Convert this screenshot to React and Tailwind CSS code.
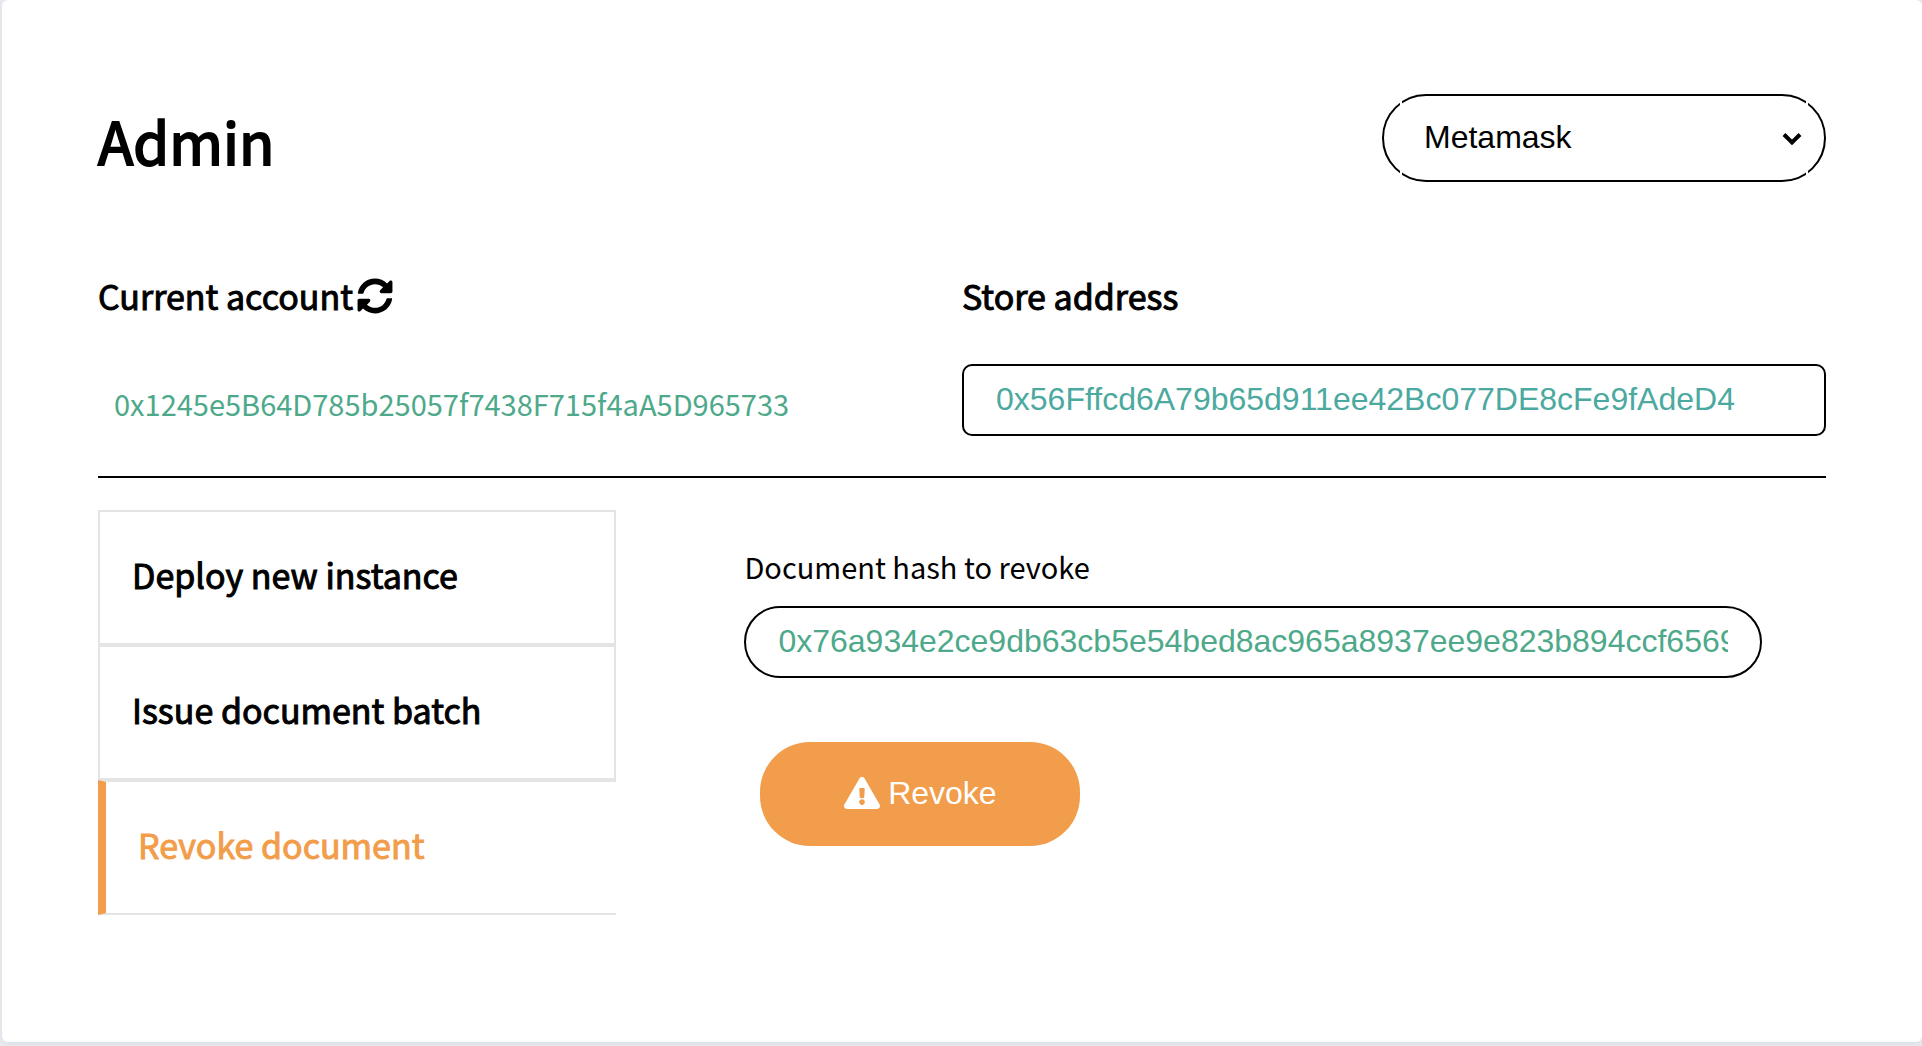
import { FaSyncAlt, FaExclamationTriangle } from "react-icons/fa";

const heading = "text-[34px] leading-[48px] font-normal [-webkit-text-stroke:1px_currentColor]";

const notches = [
  "top-[7px] left-[18px]",
  "top-[7px] right-[18px]",
  "bottom-[7px] left-[18px]",
  "bottom-[7px] right-[18px]",
];

function Tab({ label, active }) {
  return (
    <button
      type="button"
      role="tab"
      aria-selected={active ? "true" : "false"}
      className={
        active
          ? "block w-full border-y-2 border-l-8 border-y-[#e4e4e4] border-l-[#f29d4b] px-8 pt-[39px] pb-11 text-left text-[#f29d4b]"
          : "block w-full border-2 border-[#e4e4e4] px-8 pt-[39px] pb-11 text-left"
      }
    >
      <span className={`block ${heading}`}>{label}</span>
    </button>
  );
}

export default function App() {
  return (
    <div className="min-h-screen bg-[#e8ecf0] pb-1 pl-0.5 font-['Noto_Sans_CJK_SC',sans-serif] text-black">
      <main className="rounded-md bg-white px-24 pt-[94px] pb-[127px] shadow-[0_2px_8px_rgba(0,0,0,0.06)]">
        <header className="flex items-start justify-between">
          <h1 className="pt-1.5 text-[58px] leading-[80px] font-normal [-webkit-text-stroke:2px_currentColor]">
            Admin
          </h1>
          <div className="relative w-[444px]">
            <select
              aria-label="Provider"
              className="h-[88px] w-full appearance-none rounded-full border-2 border-black bg-white px-10 pb-0.5 font-['Liberation_Sans',sans-serif] text-[32px]"
            >
              <option>Metamask</option>
            </select>
            {/* Small breaks where the outline's corner joints meet */}
            {notches.map((place) => (
              <span
                key={place}
                aria-hidden="true"
                className={`pointer-events-none absolute h-1 w-0.5 bg-white ${place}`}
              />
            ))}
            <svg
              viewBox="0 0 20 14"
              className="pointer-events-none absolute top-[38px] right-6 h-3.5 w-5"
              fill="none"
              stroke="currentColor"
              strokeWidth="4"
              aria-hidden="true"
            >
              <path d="M2 2.5 10 10.5 18 2.5" />
            </svg>
          </div>
        </header>

        <section className="mt-[90px] grid grid-cols-2 border-b-2 border-black pb-10">
          <div>
            <h2 className={`flex items-center gap-1 ${heading}`}>
              Current account
              <button type="button" aria-label="Refresh account">
                <FaSyncAlt className="size-9" />
              </button>
            </h2>
            <p className="mt-[55px] px-4 text-[29px] leading-[56px] text-[#4da98a]">
              0x1245e5B64D785b25057f7438F715f4aA5D965733
            </p>
          </div>
          <div>
            <label htmlFor="store" className={`block ${heading}`}>
              Store address
            </label>
            <input
              id="store"
              type="text"
              defaultValue="0x56Fffcd6A79b65d911ee42Bc077DE8cFe9fAdeD4"
              className="mt-11 h-[72px] w-full rounded-[10px] border-2 border-black px-8 pb-0.5 font-['Liberation_Sans',sans-serif] text-[32px] text-[#4ba99f]"
            />
          </div>
        </section>

        <section className="mt-8 flex">
          <div role="tablist" className="w-[30%]">
            <Tab label="Deploy new instance" />
            <Tab label="Issue document batch" />
            <Tab label="Revoke document" active />
          </div>
          <div className="flex-1 pt-8 pr-16 pl-32">
            <label htmlFor="hash" className="block text-[29px] leading-[48px]">
              Document hash to revoke
            </label>
            <input
              id="hash"
              type="text"
              defaultValue="0x76a934e2ce9db63cb5e54bed8ac965a8937ee9e823b894ccf6569"
              className="mt-4 h-[72px] w-full rounded-full border-2 border-black px-8 pb-0.5 font-['Liberation_Sans',sans-serif] text-[32px] text-[#4da98a]"
            />
            <button
              type="button"
              className="mt-16 ml-4 flex h-[104px] w-80 items-center justify-center gap-2 rounded-[50px] bg-[#f29d4b] pb-0.5 font-['Liberation_Sans',sans-serif] text-[32px] text-white"
            >
              <FaExclamationTriangle className="h-8 w-9" />
              Revoke
            </button>
          </div>
        </section>
      </main>
    </div>
  );
}
